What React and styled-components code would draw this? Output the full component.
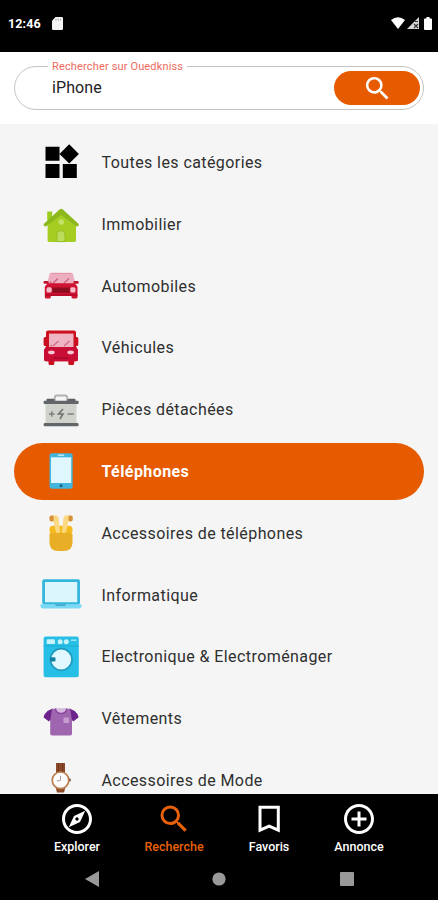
import React from 'react';
import styled, { createGlobalStyle, css } from 'styled-components';
import { MdSearch, MdOutlineExplore, MdAddCircleOutline } from 'react-icons/md';

const AllIcon = () => (
	<Picto viewBox="0 0 42 42">
		<path d="M5.5 5.8h14v14h-14zM5.5 23.1h14v13.8h-14zM22.8 23.1h14v13.8h-14zM29.2 3.2l9.7 9.7-9.7 9.7-9.7-9.7z" fill="#000" />
	</Picto>
);

const HouseIcon = () => (
	<Picto viewBox="0 0 42 42">
		<path d="M7.2 8.5h5v9h-5z" fill="#9ccc1c" />
		<path d="M21.2 8L36 21v16.6q0 1.4-1.4 1.4H9q-1.4 0-1.4-1.4V21z" fill="#a6ce22" />
		<path d="M19.8 6.3q1.4-1.1 2.8 0l15.8 14.4q1 1.2-.2 2.3-1.2.8-2.4 0L21.2 12 6.6 23q-1.2.8-2.4 0-1.2-1.1-.2-2.3z" fill="#8cb81c" />
		<circle cx="21.2" cy="19" r="2.7" fill="#c5e26a" />
		<path d="M16.8 38.6V32q0-4.3 4.1-4.3T25 32v6.6z" fill="#bcdc5c" stroke="#8cb81c" strokeWidth=".8" />
	</Picto>
);

const CarIcon = () => (
	<Picto viewBox="0 0 42 42">
		<path d="M11 8h20.5q1.2 0 1.6 1.3l2.4 10.2H7L9.4 9.3Q9.8 8 11 8z" fill="#edafc0" />
		<path d="M11 8.3h20.5" stroke="#e48ba2" strokeWidth=".9" />
		<path d="M13 18l5-4.5M24 18l5-4.5M10 18l1.3-1.4" stroke="#c95e7c" strokeWidth="1.2" />
		<rect x="3.5" y="16" width="5.2" height="2.8" rx="1.2" fill="#c4122c" />
		<rect x="33.5" y="16" width="5.2" height="2.8" rx="1.2" fill="#c4122c" />
		<path d="M7.5 18.3h27.3l2.7 3.5V32q0 1.6-1.6 1.6h-2.8q-1.6 0-1.6-1.6v-1.3H10.8V32q0 1.6-1.6 1.6H6.4q-1.6 0-1.6-1.6V21.8z" fill="#d01233" />
		<path d="M12.3 22.5h17.4v5.3H12.3z" fill="#8c0c20" />
		<rect x="6.5" y="22.3" width="5.2" height="5.2" rx="1.5" fill="#f5bcca" />
		<rect x="30.3" y="22.3" width="5.2" height="5.2" rx="1.5" fill="#f5bcca" />
		<path d="M5 29h32.3v2H5z" fill="#b90c2b" />
	</Picto>
);

const BusIcon = () => (
	<Picto viewBox="0 0 42 42">
		<rect x="3.6" y="10" width="4" height="9" rx="1.6" fill="#c70f20" />
		<rect x="34.3" y="10" width="4" height="9" rx="1.6" fill="#c70f20" />
		<path d="M8.5 30h5.8v6.5q0 1.5-1.5 1.5H10q-1.5 0-1.5-1.5zM28.3 30h5.8v6.5q0 1.5-1.5 1.5h-2.8q-1.5 0-1.5-1.5z" fill="#c70f20" />
		<path d="M8 3.4h26q2 0 2 2v14L38 23v9q0 2.2-2 2.2H6q-2 0-2-2.2v-9l2-3.6v-14q0-2 2-2z" fill="#cd1020" />
		<path d="M9 6.6h24.5V20H9z" fill="#efb4c4" />
		<path d="M6 20h30l2 3v9q0 2.2-2 2.2H6q-2 0-2-2.2v-9z" fill="#c90e36" />
		<path d="M13 19l5.5-5M24 19l5.5-5M10.5 19.5l1.5-1.5" stroke="#d06a86" strokeWidth="1.2" />
		<ellipse cx="11.4" cy="25.4" rx="3.3" ry="1.8" fill="#f7c9d4" />
		<ellipse cx="30.6" cy="25.4" rx="3.3" ry="1.8" fill="#f7c9d4" />
		<path d="M14 31h14" stroke="#a50a28" strokeWidth="1.5" />
	</Picto>
);

const BatteryIcon = () => (
	<Picto viewBox="0 0 42 42">
		<path d="M14.8 13.5V9.500q0-2 2-2h8.4q2 0 2 2v4" fill="none" stroke="#aeb2ad" strokeWidth="1.8" />
		<rect x="6.5" y="10.8" width="8" height="3" rx="1" fill="#5b5f61" />
		<rect x="27.5" y="10.8" width="8" height="3" rx="1" fill="#5b5f61" />
		<path d="M5.5 15h31v20h-31z" fill="#cfd3cb" />
		<rect x="3.6" y="12.8" width="35" height="3.2" rx="1" fill="#626668" />
		<rect x="3.6" y="35" width="35" height="3.2" rx="1.3" fill="#626668" />
		<path d="M9 26h5.5M11.8 23.2v5.5M27.5 26H34" stroke="#7d827e" strokeWidth="1.4" />
		<path d="M23 21l-4.5 5H23l-3 5" fill="none" stroke="#6c716d" strokeWidth="1.5" />
	</Picto>
);

const PhoneIcon = () => (
	<Picto viewBox="0 0 42 42">
		<rect x="9.5" y="3.3" width="23.2" height="35.4" rx="2.6" fill="#43b4dc" />
		<path d="M11 7.3h20.2V33H11z" fill="#dff6fd" />
		<path d="M18.5 5.2h5.2" stroke="#d6f3fb" strokeWidth="1.2" strokeLinecap="round" />
		<circle cx="21.1" cy="35.7" r="1.5" fill="#16637f" />
	</Picto>
);

const EarbudsIcon = () => (
	<Picto viewBox="0 0 42 42">
		<rect x="9.5" y="13.8" width="23" height="8" rx="3.5" fill="#f5ba1e" />
		<path d="M13.5 3.3h2q2.5 0 3.1 2.7l1.5 14.8h-4L13.7 9.5H12v-6z" fill="#fbd983" />
		<path d="M28.5 3.3h-2q-2.5 0-3.1 2.7l-1.5 14.8h4l2.4-11.3H30v-6z" fill="#fbd983" />
		<rect x="9.5" y="3.5" width="4.2" height="6" rx="1.7" fill="#d9903a" />
		<rect x="28.5" y="3.5" width="4.2" height="6" rx="1.7" fill="#d9903a" />
		<path d="M9.5 22.5q0-1.5 1.5-1.5h20q1.5 0 1.5 1.5v8q0 8.500-9 8.500h-5q-9 0-9-8.500z" fill="#e8ae25" />
	</Picto>
);

const LaptopIcon = () => (
	<Picto viewBox="0 0 42 42">
		<rect x="2.2" y="5.3" width="37.8" height="25.5" rx="2" fill="#35b6de" />
		<path d="M5 8h32.2v20.2H5z" fill="#dcf6fd" />
		<path d="M.5 30.3h41v1.5q0 2.7-2.7 2.7H3.2Q.5 34.5.5 31.8z" fill="#79d9f4" />
		<path d="M15 30.3h11q0 1.7-1.7 1.7h-7.6q-1.7 0-1.7-1.7z" fill="#3fa9cc" />
	</Picto>
);

const WasherIcon = () => (
	<Picto viewBox="0 0 42 42">
		<rect x="3.6" y=".5" width="35.2" height="40.7" rx="2.2" fill="#27bfe6" />
		<path d="M3.6 10h35.2" stroke="#20a9cf" strokeWidth=".8" />
		<rect x="6.7" y="3.3" width="8.3" height="4.8" rx="1.2" fill="#c9f2fb" />
		<circle cx="20.2" cy="5.7" r="2.5" fill="#c9f2fb" />
		<circle cx="26.3" cy="5.7" r="2.5" fill="#c9f2fb" />
		<path d="M31 4.2h5.5" stroke="#a6e8f8" strokeWidth="1.4" />
		<circle cx="21.2" cy="23.5" r="10.8" fill="#e0f8fe" stroke="#229bc1" strokeWidth="1.7" />
		<rect x="10" y="21.2" width="5.5" height="4.2" rx="1.2" fill="#147f9f" />
	</Picto>
);

const ShirtIcon = () => (
	<Picto viewBox="0 0 42 42">
		<path d="M12.5 11.5l-5 2.5q-2.8 2.2-4 6.3l5.4 4.2 4.8-5zM29.7 11.5l5 2.5q2.8 2.2 4 6.3l-5.4 4.2-4.8-5z" fill="#6c248c" />
		<path d="M12 11.7h18.2L32 24v12.7q0 1.8-1.8 1.8H12q-1.8 0-1.8-1.8V24z" fill="#a065af" />
		<path d="M15.5 11.5h11.2q-.6 4.2-5.6 4.2t-5.6-4.2z" fill="#d8b7df" />
		<path d="M15.5 11.5q.6 5 5.6 5t5.6-5" fill="none" stroke="#84409a" strokeWidth="1.2" />
		<path d="M23.5 20.5h5.7V26h-5.7z" fill="#c89bd0" />
	</Picto>
);

const WatchIcon = () => (
	<Picto viewBox="0 0 42 42">
		<path d="M16 4h9v10h-9zM15.5 28h10L24 33.5h-7z" fill="#8d4a2a" />
		<path d="M18.5 4v9M22.5 4v9" stroke="#713719" strokeWidth="1" />
		<rect x="28.7" y="19.5" width="2" height="3" rx="1" fill="#6b3a22" />
		<circle cx="20.5" cy="21.3" r="8.3" fill="#fdfdfd" stroke="#bf8050" strokeWidth="1.7" />
		<path d="M20.5 16.8v4.5l-3.8.8" fill="none" stroke="#ad9c92" strokeWidth="1" />
	</Picto>
);

const BookmarkIcon = ({ size }) => (
	<svg width={size} height={size} viewBox="0 0 24 24">
		<path d="M6 4.1h12.2v15.3l-6.1-2.7L6 19.4z" fill="none" stroke="currentColor" strokeWidth="2" />
	</svg>
);

const categories = [
	{ name: 'Toutes les catégories', Icon: AllIcon },
	{ name: 'Immobilier', Icon: HouseIcon },
	{ name: 'Automobiles', Icon: CarIcon },
	{ name: 'Véhicules', Icon: BusIcon },
	{ name: 'Pièces détachées', Icon: BatteryIcon },
	{ name: 'Téléphones', Icon: PhoneIcon, active: true },
	{ name: 'Accessoires de téléphones', Icon: EarbudsIcon },
	{ name: 'Informatique', Icon: LaptopIcon },
	{ name: 'Electronique & Electroménager', Icon: WasherIcon },
	{ name: 'Vêtements', Icon: ShirtIcon },
	{ name: 'Accessoires de Mode', Icon: WatchIcon },
];

const tabs = [
	{ name: 'Explorer', Icon: MdOutlineExplore, width: 46 },
	{ name: 'Recherche', Icon: MdSearch, width: 60, active: true },
	{ name: 'Favoris', Icon: BookmarkIcon, width: 42 },
	{ name: 'Annonce', Icon: MdAddCircleOutline, width: 50 },
];

const App = () => {
	return (
		<Screen>
			<GlobalStyle />
			<StatusBar>
				<Clock>12:46</Clock>
				<svg width="11" height="13" viewBox="0 0 11 13">
					<path d="M3.5 0h6.3Q11 0 11 1.200v10.600Q11 13 9.800 13H1.200Q0 13 0 11.800V3.700z" fill="#f4f4f4" />
					<path d="M4 1.500v2.300M6.200 1.500v2.300M8.400 1.500v2.300" stroke="#aaa" strokeWidth=".9" />
				</svg>
				<StatusIcons>
					<svg width="14" height="12" viewBox="0 0 14 12">
						<path d="M0 3q7-5.500 14 0l-7 9z" fill="#fff" />
					</svg>
					<svg width="12" height="12" viewBox="0 0 12 12">
						<path d="M12 0v12H0z" fill="#d8d8d8" />
						<path d="M7 7l4 4M11 7l-4 4M8 4.500h3" stroke="#333" strokeWidth="1.1" />
					</svg>
					<svg width="8" height="13" viewBox="0 0 8 13">
						<path d="M2.4 0h3.200v1.500H7q1 0 1 1V12q0 1-1 1H1q-1 0-1-1V2.500q0-1 1-1h1.400z" fill="#fff" />
					</svg>
				</StatusIcons>
			</StatusBar>
			<SearchArea>
				<SearchField>
					<FieldLabel>Rechercher sur Ouedkniss</FieldLabel>
					<FieldValue>iPhone</FieldValue>
					<SearchButton aria-label="Rechercher">
						<MdSearch size={31} />
					</SearchButton>
				</SearchField>
			</SearchArea>
			<CategoryList>
				{categories.map(({ name, Icon, active }) => (
					<CategoryRow key={name} $active={active}>
						<Icon />
						<CategoryName $active={active}>{name}</CategoryName>
					</CategoryRow>
				))}
			</CategoryList>
			<TabBar>
				{tabs.map(({ name, Icon, width, active }) => (
					<Tab key={name} $width={width} $active={active}>
						<Icon size={36} />
						<TabName>{name}</TabName>
					</Tab>
				))}
			</TabBar>
			<SystemBar>
				<svg width="14" height="16" viewBox="0 0 14 16">
					<path d="M14 0v16L0 8z" fill="#999" />
				</svg>
				<svg width="14" height="14" viewBox="0 0 14 14">
					<circle cx="7" cy="7" r="6.6" fill="#999" />
				</svg>
				<svg width="14" height="14" viewBox="0 0 14 14">
					<rect width="14" height="14" rx="1" fill="#999" />
				</svg>
			</SystemBar>
		</Screen>
	);
};

export default App;

const GlobalStyle = createGlobalStyle`
	* {
		box-sizing: border-box;
	}
	body {
		margin: 0;
		background: #000;
		font-family: Roboto, sans-serif;
	}
`;

const Screen = styled.div`
	display: flex;
	flex-direction: column;
	width: 438px;
	height: 900px;
	overflow: hidden;
	background: #000;
`;
const StatusBar = styled.div`
	display: flex;
	align-items: center;
	flex: none;
	height: 52px;
	padding: 0 6px 6px 8px;
	color: #fff;
	gap: 11px;
`;
const Clock = styled.div`
	width: 33px;
	font-size: 12.5px;
	font-weight: 700;
	letter-spacing: 0.1px;
	white-space: nowrap;
`;
const StatusIcons = styled.div`
	display: flex;
	align-items: center;
	margin-left: auto;
	gap: 2px;
	svg:last-child {
		margin-left: 3px;
	}
`;
const SearchArea = styled.div`
	flex: none;
	height: 72px;
	padding: 14px 14px 0;
	background: #fff;
`;
const SearchField = styled.div`
	position: relative;
	display: flex;
	align-items: center;
	justify-content: space-between;
	height: 44px;
	padding: 0 3px 0 37px;
	border: 1px solid #c4c4c4;
	border-radius: 22px;
`;
const FieldLabel = styled.div`
	position: absolute;
	top: -7px;
	left: 33px;
	padding: 0 4px;
	background: #fff;
	color: #ec6a5c;
	font-size: 11px;
	line-height: 14px;
	letter-spacing: 0.15px;
	white-space: nowrap;
`;
const FieldValue = styled.div`
	color: #222;
	font-size: 16px;
	line-height: 20px;
	letter-spacing: 0.1px;
`;
const SearchButton = styled.button`
	display: flex;
	align-items: center;
	justify-content: center;
	width: 86px;
	height: 34px;
	padding: 0;
	border: 0;
	border-radius: 17px;
	background: #e65a00;
	color: #fff;
`;
const CategoryList = styled.div`
	display: flex;
	flex: none;
	flex-direction: column;
	height: 670px;
	padding: 9.8px 14px 0;
	overflow: hidden;
	background: #f5f5f5;
	gap: 5px;
`;
const CategoryRow = styled.div`
	display: flex;
	flex: none;
	align-items: center;
	height: 56.8px;
	padding-left: 25.5px;
	border-radius: 29px;
	gap: 20px;
	${({ $active }) =>
		$active &&
		css`
			background: #e65a00;
		`}
`;
const Picto = styled.svg`
	flex: none;
	width: 42px;
	height: 42px;
`;
const CategoryName = styled.div`
	padding-top: 1.6px;
	color: ${({ $active }) => ($active ? '#fff' : '#2f2f2f')};
	font-size: 16px;
	font-weight: ${({ $active }) => ($active ? 700 : 400)};
	line-height: 20px;
	letter-spacing: 0.42px;
	white-space: nowrap;
`;
const TabBar = styled.div`
	display: flex;
	flex: none;
	justify-content: center;
	height: 64px;
	padding-top: 7px;
	gap: 44px;
`;
const Tab = styled.div`
	display: flex;
	flex-direction: column;
	align-items: center;
	width: ${({ $width }) => $width}px;
	color: ${({ $active }) => ($active ? '#e8600a' : '#fff')};
	svg {
		flex: none;
	}
`;
const TabName = styled.div`
	font-size: 12.5px;
	font-weight: 500;
	line-height: 19px;
	white-space: nowrap;
`;
const SystemBar = styled.div`
	display: flex;
	flex: none;
	align-items: center;
	justify-content: space-between;
	height: 42px;
	padding: 0 84.5px;
`;
